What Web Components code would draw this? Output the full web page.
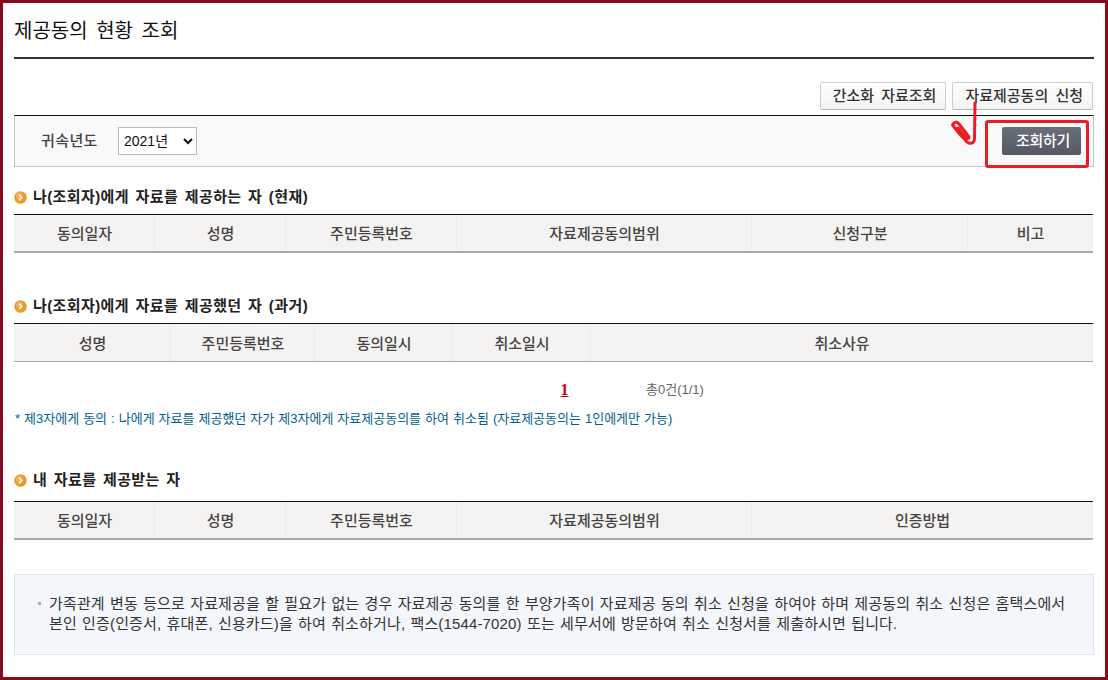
<!DOCTYPE html>
<html lang="ko">
<head>
<meta charset="utf-8">
<title>제공동의 현황 조회</title>
<style>
  html, body { margin: 0; padding: 0; background: #fff; }
  body { font-family: "Liberation Sans", "Noto Sans CJK KR", sans-serif; color: #333; }
</style>
</head>
<body>

<page-frame>
  <page-title>제공동의 현황 조회</page-title>

  <action-bar>
    <gray-button>간소화 자료조회</gray-button>
    <gray-button>자료제공동의 신청</gray-button>
  </action-bar>

  <search-box label="귀속년도" year="2021년" action="조회하기"></search-box>

  <data-section heading="나(조회자)에게 자료를 제공하는 자 (현재)" cols="141px 131px 171px 295px 216px 1fr" gap-top="20" row="36" line="2">
    <head-cell>동의일자</head-cell>
    <head-cell>성명</head-cell>
    <head-cell>주민등록번호</head-cell>
    <head-cell>자료제공동의범위</head-cell>
    <head-cell>신청구분</head-cell>
    <head-cell>비고</head-cell>
  </data-section>

  <data-section heading="나(조회자)에게 자료를 제공했던 자 (과거)" cols="157px 144px 138px 138px 1fr" gap-top="43" row="37" line="1">
    <head-cell>성명</head-cell>
    <head-cell>주민등록번호</head-cell>
    <head-cell>동의일시</head-cell>
    <head-cell>취소일시</head-cell>
    <head-cell>취소사유</head-cell>
  </data-section>

  <page-info current="1" total="총0건(1/1)"></page-info>

  <foot-note>* 제3자에게 동의 : 나에게 자료를 제공했던 자가 제3자에게 자료제공동의를 하여 취소됨 (자료제공동의는 1인에게만 가능)</foot-note>

  <data-section heading="내 자료를 제공받는 자" cols="141px 131px 171px 295px 1fr" gap-top="41" row="36" line="2" head-gap="11">
    <head-cell>동의일자</head-cell>
    <head-cell>성명</head-cell>
    <head-cell>주민등록번호</head-cell>
    <head-cell>자료제공동의범위</head-cell>
    <head-cell>인증방법</head-cell>
  </data-section>

  <notice-box>가족관계 변동 등으로 자료제공을 할 필요가 없는 경우 자료제공 동의를 한 부양가족이 자료제공 동의 취소 신청을 하여야 하며 제공동의 취소 신청은 홈택스에서 본인 인증(인증서, 휴대폰, 신용카드)을 하여 취소하거나, 팩스(1544-7020) 또는 세무서에 방문하여 취소 신청서를 제출하시면 됩니다.</notice-box>

  <red-markup></red-markup>
</page-frame>

<script>
const FONT = '"Liberation Sans", "Noto Sans CJK KR", sans-serif';

class PageFrame extends HTMLElement {
  constructor() {
    super();
    this.attachShadow({ mode: "open" }).innerHTML = `
      <style>
        :host {
          display: block;
          position: relative;
          box-sizing: border-box;
          width: 1108px;
          height: 680px;
          overflow: hidden;
          border: 3px solid #8a0a1f;
          padding: 0 11px;
          background: #fff;
        }
      </style>
      <slot></slot>
    `;
  }
}

class PageTitle extends HTMLElement {
  constructor() {
    super();
    this.attachShadow({ mode: "open" }).innerHTML = `
      <style>
        :host {
          display: block;
          box-sizing: border-box;
          height: 56px;
          padding-top: 14px;
          border-bottom: 2px solid #333;
          font: 20px/28px ${FONT};
          word-spacing: 3px;
          color: #111;
        }
      </style>
      <slot></slot>
    `;
  }
}

class ActionBar extends HTMLElement {
  constructor() {
    super();
    this.attachShadow({ mode: "open" }).innerHTML = `
      <style>
        :host {
          display: flex;
          justify-content: flex-end;
          gap: 6px;
          margin-top: 23px;
          padding-right: 1px;
        }
      </style>
      <slot></slot>
    `;
  }
}

class GrayButton extends HTMLElement {
  constructor() {
    super();
    this.attachShadow({ mode: "open" }).innerHTML = `
      <style>
        :host {
          display: block;
          box-sizing: border-box;
          height: 28px;
          padding: 0 9px 0 12px;
          border: 1px solid #ccc;
          border-bottom-color: #b5b5b5;
          border-radius: 2px;
          background: linear-gradient(#fff, #f3f3f3);
          font: 500 15px/25px ${FONT};
          word-spacing: 3px;
          color: #333;
          white-space: nowrap;
        }
      </style>
      <slot></slot>
    `;
  }
}

class SearchBox extends HTMLElement {
  constructor() {
    super();
    const label = this.getAttribute("label");
    const year = this.getAttribute("year");
    const action = this.getAttribute("action");
    this.attachShadow({ mode: "open" }).innerHTML = `
      <style>
        :host {
          display: flex;
          align-items: center;
          box-sizing: border-box;
          height: 52px;
          margin-top: 5px;
          padding: 0 12px 0 26px;
          border: 1px solid #c4c4c4;
          border-top-color: #111;
          background: #f9f9f9;
        }
        .label {
          width: 77px;
          font: 500 15px/20px ${FONT};
          letter-spacing: 0.4px;
          color: #444;
        }
        select {
          box-sizing: border-box;
          width: 79px;
          height: 28px;
          padding: 0 0 0 1px;
          border: 1px solid #bbb;
          border-radius: 0;
          background-color: #fff;
          font: 14px ${FONT};
          color: #111;
        }
        button {
          box-sizing: border-box;
          width: 79px;
          height: 28px;
          margin-left: auto;
          padding: 0 0 0 3px;
          border: 0;
          border-radius: 2px;
          background: linear-gradient(#6b6f79, #545862);
          font: 500 15px/26px ${FONT};
          letter-spacing: -0.3px;
          color: #fff;
        }
      </style>
      <span class="label">${label}</span>
      <select aria-label="${label}"><option>${year}</option></select>
      <button type="button">${action}</button>
    `;
  }
}

class DataSection extends HTMLElement {
  constructor() {
    super();
    const cols = this.getAttribute("cols");
    const top = this.getAttribute("gap-top");
    const row = this.getAttribute("row");
    const line = this.getAttribute("line");
    const headGap = this.getAttribute("head-gap") || 7;
    this.attachShadow({ mode: "open" }).innerHTML = `
      <style>
        :host {
          display: block;
          margin: ${top}px 1px 0 0;
        }
        .heading {
          display: flex;
          align-items: center;
          gap: 6px;
          height: 20px;
          margin-bottom: ${headGap}px;
          font: 700 15px/20px ${FONT};
          letter-spacing: 0.4px;
          word-spacing: 2px;
          color: #222;
        }
        .bullet { flex: none; width: 13px; height: 13px; }
        .head {
          display: grid;
          grid-template-columns: ${cols};
          height: ${row}px;
          box-sizing: content-box;
          border-top: 1px solid #111;
          border-bottom: ${line}px solid #aaa;
          background: #f4f3f1;
        }
      </style>
      <div class="heading">
        <svg class="bullet" viewBox="0 0 13 13">
          <circle cx="6.5" cy="6.5" r="6.3" fill="#ee9a2e"/>
          <circle cx="5.5" cy="5" r="3.5" fill="#f7c274" opacity="0.6"/>
          <path d="M5 3.8 7.6 6.5 5 9.2" fill="none" stroke="#fff" stroke-width="1.6"/>
        </svg>
        <span>${this.getAttribute("heading")}</span>
      </div>
      <div class="head"><slot></slot></div>
    `;
  }
}

class HeadCell extends HTMLElement {
  constructor() {
    super();
    this.attachShadow({ mode: "open" }).innerHTML = `
      <style>
        :host {
          display: flex;
          align-items: center;
          justify-content: center;
          box-sizing: border-box;
          padding-top: 2px;
          box-shadow: inset -1px 0 0 #ebebe9;
          font: 500 15px/20px ${FONT};
          color: #444;
        }
        :host(:last-child) { box-shadow: none; }
      </style>
      <slot></slot>
    `;
  }
}

class PageInfo extends HTMLElement {
  constructor() {
    super();
    this.attachShadow({ mode: "open" }).innerHTML = `
      <style>
        :host {
          display: grid;
          grid-template-columns: 555px 77px auto;
          align-items: center;
          height: 20px;
          margin-top: 18px;
          color: #666;
        }
        a {
          grid-column: 1;
          justify-self: end;
          width: 9px;
          text-align: center;
          font: 700 16px/20px "Liberation Serif", serif;
          color: #c00;
          text-decoration: underline;
        }
        span { grid-column: 3; font: 13px/20px ${FONT}; }
      </style>
      <a>${this.getAttribute("current")}</a>
      <span>${this.getAttribute("total")}</span>
    `;
  }
}

class FootNote extends HTMLElement {
  constructor() {
    super();
    this.attachShadow({ mode: "open" }).innerHTML = `
      <style>
        :host {
          display: block;
          margin-top: 9px;
          padding-left: 1px;
          font: 13px/20px ${FONT};
          word-spacing: 0.4px;
          color: #00628c;
          white-space: nowrap;
        }
      </style>
      <slot></slot>
    `;
  }
}

class NoticeBox extends HTMLElement {
  constructor() {
    super();
    this.attachShadow({ mode: "open" }).innerHTML = `
      <style>
        :host {
          display: block;
          position: relative;
          box-sizing: border-box;
          height: 81px;
          margin-top: 34px;
          padding: 19px 24px 0 34px;
          border: 1px solid #e1e7f0;
          background: #f3f6fb;
          font: 15px/20px ${FONT};
          letter-spacing: 0.15px;
          word-spacing: 0.9px;
          color: #333;
        }
        :host::before {
          content: "";
          position: absolute;
          left: 23px;
          top: 27px;
          width: 3px;
          height: 3px;
          background: #aaa;
        }
      </style>
      <slot></slot>
    `;
  }
}

class RedMarkup extends HTMLElement {
  constructor() {
    super();
    this.attachShadow({ mode: "open" }).innerHTML = `
      <style>
        :host {
          position: absolute;
          left: -3px;
          top: -3px;
          width: 1108px;
          height: 680px;
          pointer-events: none;
        }
        svg { display: block; }
      </style>
      <svg width="1108" height="680" viewBox="0 0 1108 680" fill="none" stroke="#ed1c24">
        <rect x="986.500" y="121.500" width="101" height="45" rx="1.500" stroke-width="3"/>
        <path d="M975 103 974.500 139C974 144 970 144 967 142 962 137 957 131 952.500 125 954 122 957 121 959 124 963 129 966 133 969 137 969 139 967 139 965 137L958 128" stroke-width="3" stroke-linejoin="round" stroke-linecap="round"/>
      </svg>
    `;
  }
}

customElements.define("page-frame", PageFrame);
customElements.define("page-title", PageTitle);
customElements.define("action-bar", ActionBar);
customElements.define("gray-button", GrayButton);
customElements.define("search-box", SearchBox);
customElements.define("data-section", DataSection);
customElements.define("head-cell", HeadCell);
customElements.define("page-info", PageInfo);
customElements.define("foot-note", FootNote);
customElements.define("notice-box", NoticeBox);
customElements.define("red-markup", RedMarkup);
</script>
</body>
</html>
